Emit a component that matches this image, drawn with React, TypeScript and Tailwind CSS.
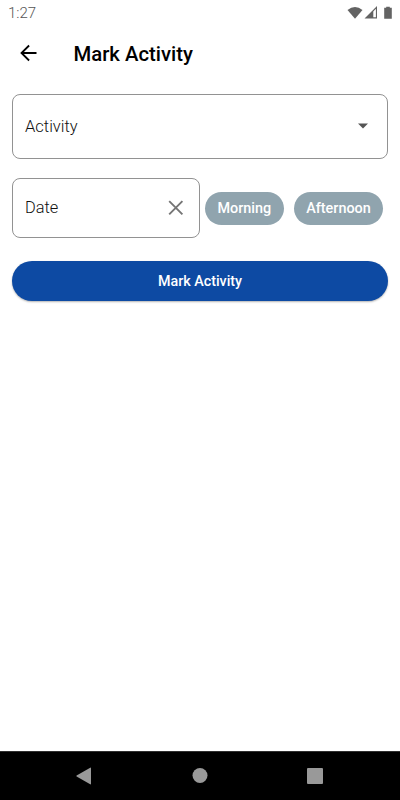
import { useState } from 'react';

const periods = ['Morning', 'Afternoon'];

function StatusBar() {
  return (
    <div className="flex h-[26px] shrink-0 items-center justify-between pl-2 pr-[7px] text-[#636363]">
      <span className="text-[15px] font-light leading-none text-[#555]">1:27</span>
      <svg width="46" height="14" viewBox="0 0 46 14" fill="currentColor" aria-hidden="true">
        <path d="M0.5 4Q8 -1.8 15.5 4L8 12.8Z" />
        <path fillRule="evenodd" d="M30 0V12.5H17.5ZM26.3 5.4V11.3H28.9V2.8Z" />
        <path d="M39.2 0.8H42.8V1.8H44.8V12.8H37.2V1.8H39.2Z" />
      </svg>
    </div>
  );
}

function AppBar() {
  return (
    <header className="flex h-[56px] shrink-0 items-center pb-[2px] pl-[16px]">
      <button aria-label="Back" className="mr-[33.5px] text-black">
        <svg
          width="24"
          height="24"
          viewBox="0 0 24 24"
          fill="none"
          stroke="currentColor"
          strokeWidth="1.8"
        >
          <path d="M20.5 12H5.5M13.1 4.5L5.5 12L13.1 19.5" />
        </svg>
      </button>
      <h1 className="pt-[3px] text-[20.3px] font-medium leading-none text-black">Mark Activity</h1>
    </header>
  );
}

function NavBar() {
  return (
    <nav className="flex h-[49px] shrink-0 items-center justify-between border-t border-[#303030] bg-black pl-[76px] pr-[77px] text-[#999]">
      <svg width="15" height="18" viewBox="0 0 15 18" fill="currentColor" aria-hidden="true">
        <path d="M14.2 0.7Q15 0.3 15 1.2V16.8Q15 17.7 14.2 17.3L0.6 9.5Q0 9 0.6 8.5Z" />
      </svg>
      <svg className="ml-[2px]" width="16" height="16" viewBox="0 0 16 16" fill="currentColor" aria-hidden="true">
        <circle cx="8" cy="7.5" r="7.5" />
      </svg>
      <span className="size-4 rounded-[1px] bg-[#999]" />
    </nav>
  );
}

export default function App() {
  const [selected, setSelected] = useState('');

  return (
    <div className="flex h-[800px] w-[400px] flex-col bg-white font-['Roboto',sans-serif]">
      <StatusBar />
      <AppBar />

      <main className="flex flex-1 flex-col px-3 pt-3">
        <button className="flex h-[65px] items-center justify-between rounded-lg border border-[#929292] pl-[12px] pr-[18px] text-[#555]">
          <span className="pt-px text-[16.5px] font-light leading-none text-[#111]">Activity</span>
          <svg className="mb-[2px]" width="12" height="6" viewBox="0 0 12 6" fill="currentColor" aria-hidden="true">
            <path d="M1 0.5H11L6 5.5Z" />
          </svg>
        </button>

        <div className="mt-[19px] flex items-center">
          <div className="flex h-[60px] w-[188px] items-center justify-between rounded-lg border border-[#929292] pl-[12px] pr-[11px]">
            <span className="text-[16.4px] font-light leading-none text-[#111]">Date</span>
            <button aria-label="Clear date" className="text-[#757575]">
              <svg
                width="24"
                height="24"
                viewBox="0 0 24 24"
                fill="none"
                stroke="currentColor"
                strokeWidth="1.9"
              >
                <path d="M5.2 5.2L18.4 18.4M18.4 5.2L5.2 18.4" />
              </svg>
            </button>
          </div>
          <div className="ml-[5px] flex gap-[10px]">
            {periods.map((period) => (
              <button
                key={period}
                aria-pressed={selected === period}
                onClick={() => setSelected(period)}
                className="h-[33px] rounded-full bg-[#90a4ae] px-[12.5px] pt-[2px] text-[14.4px] font-medium leading-none text-white"
              >
                {period}
              </button>
            ))}
          </div>
        </div>

        <button className="mt-[23px] h-10 rounded-full bg-[#0d4aa3] pt-px text-[14.3px] font-medium leading-none text-white shadow-[0_1px_2px_rgba(0,0,0,0.3)]">
          Mark Activity
        </button>
      </main>

      <NavBar />
    </div>
  );
}
